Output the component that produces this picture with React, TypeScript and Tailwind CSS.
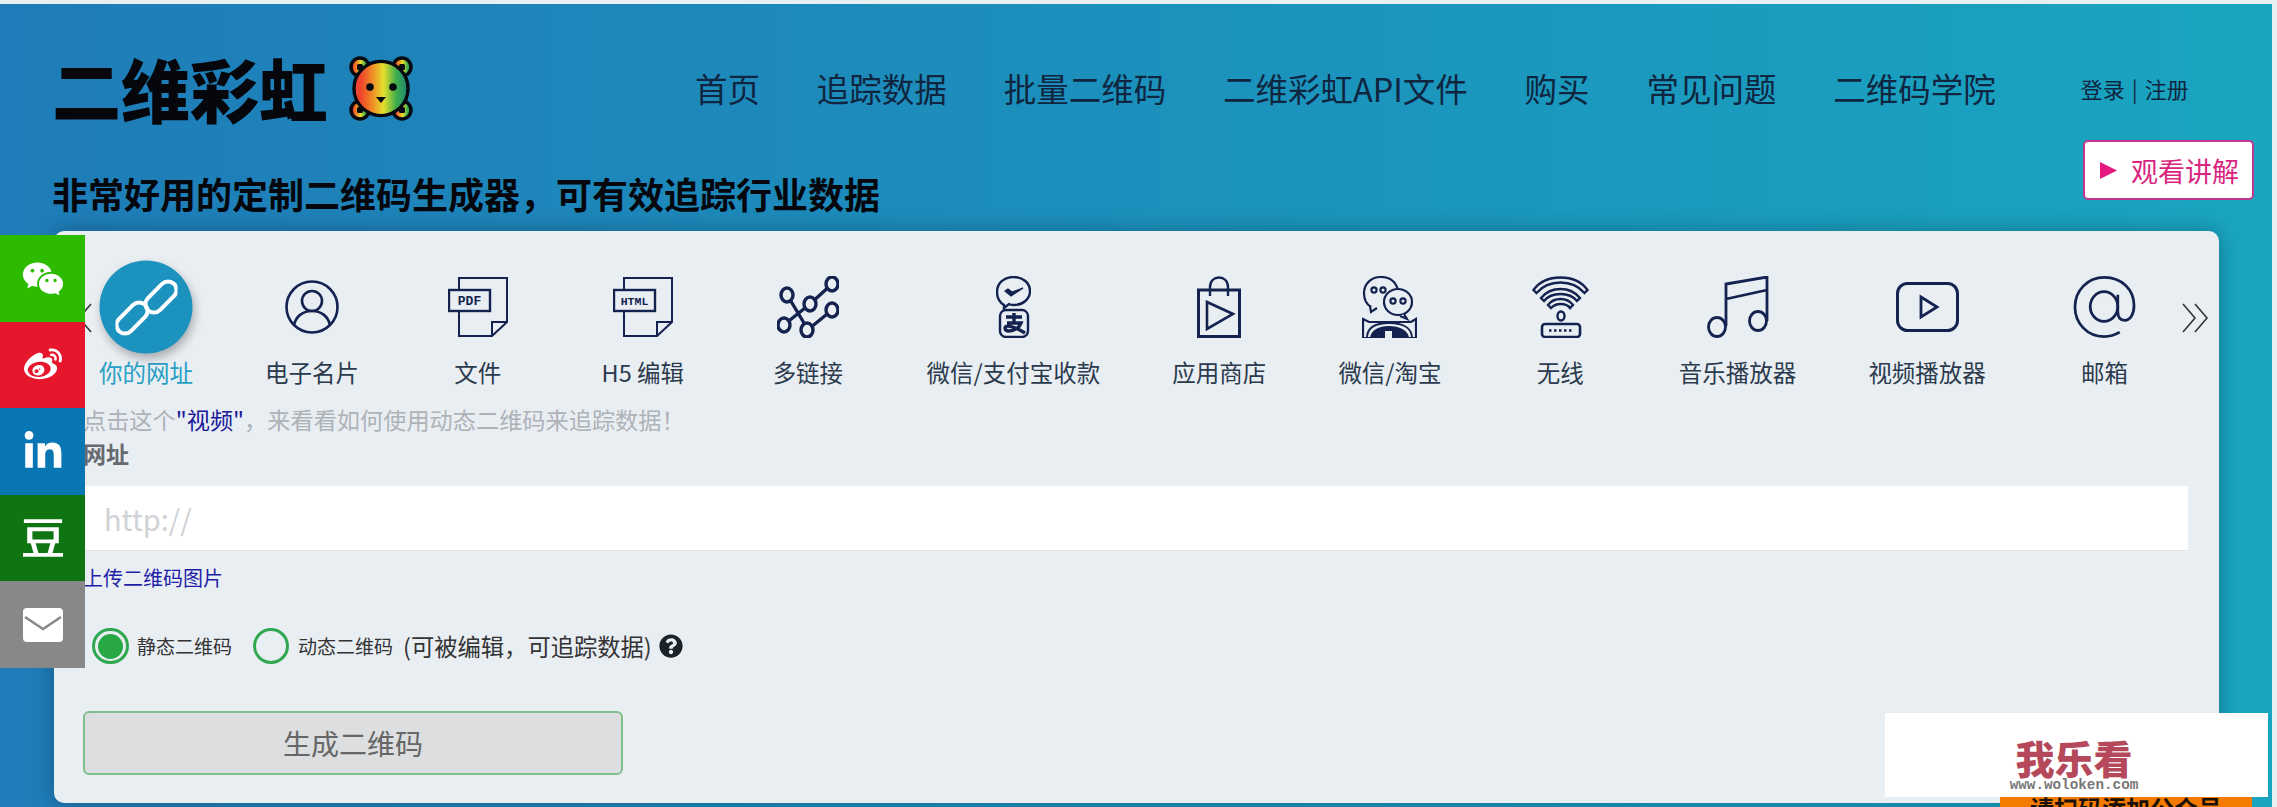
import React from "react";
import { FaLinkedinIn, FaQuestionCircle, FaWeibo } from "react-icons/fa";
import { RiWechatFill } from "react-icons/ri";
import { SiDouban } from "react-icons/si";

const ink = "#14224f";

const Bear = () => (
  <svg viewBox="0 0 64 67" className="h-[67px] w-[64px]">
    <defs>
      <linearGradient id="rainbow" x1="0" x2="1" y1="0" y2="0">
        <stop offset="0.1" stopColor="#f0442c" />
        <stop offset="0.32" stopColor="#f08a26" />
        <stop offset="0.55" stopColor="#e6e02c" />
        <stop offset="0.8" stopColor="#3fae4a" />
        <stop offset="1" stopColor="#1f8a70" />
      </linearGradient>
    </defs>
    <g fill="url(#rainbow)" stroke="#06090f" strokeWidth="3.5">
      <circle cx="11" cy="12" r="9" />
      <circle cx="53" cy="12" r="9" />
      <circle cx="11" cy="55" r="9" />
      <circle cx="53" cy="55" r="9" />
      <circle cx="32" cy="33.5" r="27" />
    </g>
    <g fill="url(#rainbow)">
      <circle cx="32" cy="33.5" r="25.2" />
    </g>
    <g fill="#06090f">
      <rect x="8" y="9" width="6" height="6" rx="1.5" />
      <rect x="50" y="9" width="6" height="6" rx="1.5" />
      <rect x="8" y="52" width="6" height="6" rx="1.5" />
      <rect x="50" y="52" width="6" height="6" rx="1.5" />
      <circle cx="21" cy="32" r="3.8" />
      <circle cx="44" cy="32" r="3.8" />
      <path d="M27 42h10l-5 6z" />
    </g>
  </svg>
);

const ChainIcon = () => (
  <svg viewBox="0 0 62 62" className="h-[62px] w-[62px]" fill="none" stroke="#fff" strokeWidth="4">
    <rect x="-2" y="33" width="37" height="17" rx="8.5" transform="rotate(-45 16.5 41.5)" />
    <rect x="27" y="12" width="37" height="17" rx="8.5" transform="rotate(-45 45.5 20.5)" />
  </svg>
);

const UserIcon = () => (
  <svg viewBox="0 0 54 54" className="h-[54px] w-[54px]" fill="none" stroke={ink} strokeWidth="2.6">
    <circle cx="27" cy="27" r="25.5" />
    <circle cx="27" cy="21" r="10" />
    <path d="M9 45c2-9 9-14 18-14s16 5 18 14" />
  </svg>
);

const FileIcon = ({ label }: { label: string }) => (
  <svg viewBox="0 0 60 60" className="h-[60px] w-[60px]" fill="none" stroke={ink} strokeWidth="2">
    <path d="M11 12V1h48v44L44 59H11V29" />
    <path d="M44 59V45h15" />
    <rect x="1" y="13" width="41" height="21" fill="#e9eef3" strokeWidth="2.4" />
    <text
      x="21.5"
      y="28"
      textAnchor="middle"
      fontSize={label === "PDF" ? 13 : 11.5}
      fontWeight="700"
      fontFamily="'Liberation Mono', monospace"
      fill={ink}
      stroke="none"
    >
      {label}
    </text>
  </svg>
);

const NodesIcon = () => (
  <svg viewBox="0 0 62 62" className="h-[62px] w-[62px]" fill="none" stroke={ink} strokeWidth="3.4">
    <path d="M12 22l18 30M8 48l25-20 22-20M33 52l22-18" />
    <ellipse cx="10" cy="19" rx="6" ry="7" fill="#e9eef3" />
    <ellipse cx="55" cy="8" rx="6" ry="7" fill="#e9eef3" />
    <ellipse cx="33" cy="28" rx="6" ry="7" fill="#e9eef3" />
    <ellipse cx="55" cy="34" rx="6" ry="7" fill="#e9eef3" />
    <ellipse cx="7" cy="49" rx="6" ry="7" fill="#e9eef3" />
    <ellipse cx="30" cy="54" rx="6" ry="7" fill="#e9eef3" />
  </svg>
);

const PayIcon = () => (
  <svg viewBox="0 0 35 62" className="h-[62px] w-[35px]" fill="none" stroke={ink} strokeWidth="2.4">
    <path d="M8 29C3 26 1 21 1 16 1 7 8 1 17.5 1S34 7 34 15 27 29 18 29c-2 0-4 0-5-1l-5 4z" />
    <path d="M9 15l6 5 12-8-11 4-4-3z" fill={ink} strokeWidth="1.2" />
    <rect x="4" y="34" width="28" height="27" rx="6" />
    <path d="M10 41h16M18 37v9M11 47h14c-2 5-7 8-12 8-3 0-4-1-4-3 0-3 7-3 20 5" strokeWidth="3.4" />
  </svg>
);

const ShopIcon = () => (
  <svg viewBox="0 0 44 62" className="h-[62px] w-[44px]" fill="none" stroke={ink} strokeWidth="3">
    <path d="M1.5 14h41v46.5h-41z" />
    <path d="M13 20V11C13 5 17 1.5 22 1.5S31 5 31 11v9" strokeWidth="2.4" />
    <path d="M10 26l26 12-26 15z" strokeWidth="2.6" />
  </svg>
);

const WechatTaobaoIcon = () => (
  <svg viewBox="0 0 55 62" className="h-[62px] w-[55px]" fill="none" stroke={ink} strokeWidth="2.2">
    <path d="M9 31C4 28 2 23 2 17 2 8 9 1 19 1s15 6 17 13" />
    <path d="M8 30l1 6 6-4" />
    <ellipse cx="36" cy="26" rx="14" ry="13" fill="#e9eef3" />
    <path d="M42 38l3 5-7-3" fill="#e9eef3" />
    <circle cx="12" cy="14" r="2.6" />
    <circle cx="21" cy="14" r="2.6" />
    <circle cx="31" cy="25" r="2.6" />
    <circle cx="41" cy="25" r="2.6" />
    <path d="M1 62V43l6 3h42l5-3v19z" />
    <path d="M5 62c0-10 8-15 22-15s23 5 23 15" strokeWidth="2" />
    <path d="M9 62c1-7 8-11 18-11s18 4 19 11z" fill={ink} />
    <rect x="23" y="55" width="7" height="7" fill="#e9eef3" stroke="none" />
  </svg>
);

const WifiIcon = () => (
  <svg viewBox="0 0 57 62" className="h-[62px] w-[57px]" fill="none" stroke={ink} strokeWidth="2.4">
    <path d="M1.5 14C8 5 17 1.5 28.5 1.5S49 5 55.5 14l-3 3C46 9.5 38 6.5 28.5 6.5S11 9.5 4.5 17z" />
    <path d="M9 22c5-6 12-9 19.5-9S43 16 48 22l-3 3c-4-5-10-7-16.500-7S16 20 12 25z" />
    <path d="M16 29c3-4 8-6 12.500-6S38 25 41 29l-3 3c-2-3-6-4-9.500-4S22 29 19 32z" />
    <ellipse cx="29" cy="40" rx="3.500" ry="4.500" />
    <rect x="10" y="48" width="38" height="13" rx="3" strokeWidth="2.6" />
    <path d="M17 54.500h24" strokeDasharray="2.500 2.500" strokeWidth="2.500" />
  </svg>
);

const MusicIcon = () => (
  <svg viewBox="0 0 62 62" className="h-[62px] w-[62px]" fill="none" stroke={ink} strokeWidth="2.8">
    <ellipse cx="10" cy="51" rx="8.500" ry="9.500" />
    <ellipse cx="51" cy="45" rx="8.500" ry="9.500" />
    <path d="M19 50V8L60 1v44M19 23l41-9" />
  </svg>
);

const VideoIcon = () => (
  <svg viewBox="0 0 63 50" className="h-[50px] w-[63px]" fill="none" stroke={ink} strokeWidth="3">
    <rect x="1.500" y="1.500" width="60" height="47" rx="10" />
    <path d="M25 15l16 10-16 10z" strokeWidth="2.800" />
  </svg>
);

const AtIcon = () => (
  <svg viewBox="0 0 63 63" className="h-[62px] w-[63px]" fill="none" stroke={ink} strokeWidth="2.800">
    <path d="M47 57c-5 3-10 4.500-16 4.500C14 61.500 1.500 48 1.500 31.500S14 1.500 31.500 1.500 61.500 14 61.500 30c0 9-4 15-9.500 15s-7-4-7-9V19" />
    <ellipse cx="31" cy="31" rx="14" ry="15" />
  </svg>
);

const MailIcon = () => (
  <svg viewBox="0 0 40 34" className="h-[34px] w-[40px]">
    <rect width="40" height="34" rx="4" fill="#fff" />
    <path d="M2 9l18 12L38 9" fill="none" stroke="#888" strokeWidth="2.500" />
  </svg>
);

const tabs = [
  { label: "你的网址", icon: <ChainIcon />, active: true },
  { label: "电子名片", icon: <UserIcon /> },
  { label: "文件", icon: <FileIcon label="PDF" /> },
  { label: "H5 编辑", icon: <FileIcon label="HTML" /> },
  { label: "多链接", icon: <NodesIcon /> },
  { label: "微信/支付宝收款", icon: <PayIcon /> },
  { label: "应用商店", icon: <ShopIcon /> },
  { label: "微信/淘宝", icon: <WechatTaobaoIcon /> },
  { label: "无线", icon: <WifiIcon /> },
  { label: "音乐播放器", icon: <MusicIcon /> },
  { label: "视频播放器", icon: <VideoIcon /> },
  { label: "邮箱", icon: <AtIcon /> },
];

const navItems = ["首页", "追踪数据", "批量二维码", "二维彩虹API文件", "购买", "常见问题", "二维码学院"];

const App = () => {
  return (
    <div className="relative flex h-[807px] w-[2277px] overflow-hidden bg-[#e8f0f2] pt-[4px] font-['Noto_Sans_CJK_SC','Liberation_Sans',sans-serif]">
      <div className="h-full w-[2272px] bg-gradient-to-r from-[#1f7cb8] to-[#19a5c0]">
        {/* Header */}
        <div className="box-content flex h-[76px] items-center pt-[46px] pl-[52px]">
          <span className="text-[69px] leading-none font-black text-[#05070d]">二维彩虹</span>
          <span className="ml-[21px] flex">
            <Bear />
          </span>
          <nav className="ml-[282px] flex items-center gap-[56.800px] text-[32.500px] leading-none text-[#0f2540]">
            {navItems.map((item) => (
              <a key={item}>{item}</a>
            ))}
          </nav>
          <div className="ml-[85px] flex items-center gap-[7px] text-[22px] leading-none text-[#0f2540]">
            <span>登录</span>
            <span>|</span>
            <span>注册</span>
          </div>
        </div>

        <h1 className="mt-[42px] mb-[13px] pl-[52px] text-[36px] leading-[50px] font-bold text-[#05070d]">
          非常好用的定制二维码生成器，可有效追踪行业数据
        </h1>

        {/* Main card */}
        <div className="relative ml-[54px] h-[572px] w-[2165px] rounded-[10px] bg-[#e9eef3] pt-[45px] pr-[31px] pl-[29px] shadow-[0_0_22px_rgba(0,0,0,0.28)]">
          <div className="ml-[16px] flex gap-[72.100px]">
            {tabs.map((tab) => (
              <div key={tab.label} className="flex min-w-[93px] shrink-0 flex-col items-center">
                <div className="relative flex h-[62px] items-center justify-center">
                  {tab.active ? (
                    <div className="absolute top-1/2 left-1/2 flex h-[93px] w-[93px] -translate-x-1/2 -translate-y-1/2 items-center justify-center rounded-full bg-[#1c92bf] shadow-[2px_5px_10px_rgba(0,0,0,0.28)]">
                      {tab.icon}
                    </div>
                  ) : (
                    tab.icon
                  )}
                </div>
                <span
                  className={`mt-[17px] text-[23.500px] leading-[34px] whitespace-nowrap ${
                    tab.active ? "text-[#2a9fc4]" : "text-[#2b3a4d]"
                  }`}
                >
                  {tab.label}
                </span>
              </div>
            ))}
          </div>

          {/* Slider arrows */}
          <svg viewBox="0 0 30 30" className="absolute top-[72px] left-[9px] h-[30px] w-[30px]" fill="none" stroke="#333" strokeWidth="1.600">
            <path d="M16 1L4 15l12 14M28 1L16 15l12 14" />
          </svg>
          <svg viewBox="0 0 30 30" className="absolute top-[72px] left-[2127px] h-[30px] w-[30px]" fill="none" stroke="#333" strokeWidth="1.600">
            <path d="M2 1l12 14L2 29M14 1l12 14-12 14" />
          </svg>

          <p className="mt-[13px] text-[23.200px] leading-[34px] text-[#aeb3b8]">
            点击这个<span className="text-[#1a1a9c]">"视频"</span>，来看看如何使用动态二维码来追踪数据！
          </p>
          <p className="text-[23px] leading-[34px] font-bold text-[#666a70]">网址</p>

          <input
            readOnly
            placeholder="http://"
            className="mt-[16px] block h-[65px] w-full border-b border-[#dfe3e8] bg-white pl-[21px] text-[29px] outline-none placeholder:text-[#cfd2d6]"
          />

          <a className="mt-[12px] block text-[20px] leading-[30px] text-[#1f1fa8]">上传二维码图片</a>

          {/* Code type */}
          <div className="mt-[35px] ml-[9px] flex h-[36px] items-center">
            <span className="flex h-[36px] w-[37px] items-center justify-center rounded-full border-[3px] border-[#2fa84f]">
              <span className="h-[25px] w-[25px] rounded-full bg-[#28a745]" />
            </span>
            <span className="ml-[8px] text-[19px] text-[#333]">静态二维码</span>
            <span className="ml-[21px] h-[36px] w-[36px] rounded-full border-[3px] border-[#2fa84f]" />
            <span className="ml-[9px] text-[19px] text-[#333]">动态二维码</span>
            <span className="ml-[10px] text-[23.300px] text-[#333]">(可被编辑，可追踪数据)</span>
            <FaQuestionCircle className="ml-[7px] h-[24px] w-[24px] text-[#1b2228]" />
          </div>

          <button className="mt-[47px] h-[64px] w-[540px] rounded-[6px] border-2 border-[#80bf8c] bg-[#dcdee0] text-[28px] text-[#666]">
            生成二维码
          </button>
        </div>
      </div>

      {/* Share sidebar */}
      <div className="absolute top-[235px] left-0 flex w-[85px] flex-col text-white">
        <div className="flex h-[87px] items-center justify-center bg-[#2dbb00]">
          <RiWechatFill className="h-[44px] w-[44px]" />
        </div>
        <div className="flex h-[86px] items-center justify-center bg-[#e6162d]">
          <FaWeibo className="h-[38px] w-[40px]" />
        </div>
        <div className="flex h-[87px] items-center justify-center bg-[#0976b4]">
          <FaLinkedinIn className="h-[42px] w-[42px]" />
        </div>
        <div className="flex h-[86px] items-center justify-center bg-[#0f7512]">
          <SiDouban className="h-[40px] w-[40px]" />
        </div>
        <div className="flex h-[87px] items-center justify-center bg-[#888888]">
          <MailIcon />
        </div>
      </div>

      {/* Watch video button */}
      <div className="absolute top-[140px] left-[2083px] flex h-[60px] w-[171px] items-center rounded-[5px] border-2 border-[#c2378f] bg-white pl-[15px]">
        <svg viewBox="0 0 17 17" className="h-[17px] w-[17px]">
          <path d="M0 0l17 8.500L0 17z" fill="#e3197f" />
        </svg>
        <span className="ml-[14px] text-[27px] leading-none whitespace-nowrap text-[#d9267f]">观看讲解</span>
      </div>

      {/* Clipped promo strip behind the watermark */}
      <div className="absolute top-[797px] left-[2000px] flex h-[24px] w-[252px] justify-center bg-[#f47a00] text-[24px] leading-[22px] font-bold text-[#1a1208]">
        请扫码添加公众号
      </div>

      {/* Watermark */}
      <div className="absolute top-[713px] left-[1885px] flex h-[84px] w-[383px] flex-col items-center bg-white pt-[22px] pr-[5px]">
        <span className="text-[39px] leading-[44px] font-black text-[#b5495b]">我乐看</span>
        <span className="font-['Liberation_Mono',monospace] text-[14.300px] leading-[13px] font-bold text-[#777]">
          www.woloken.com
        </span>
      </div>
    </div>
  );
};

export default App;
